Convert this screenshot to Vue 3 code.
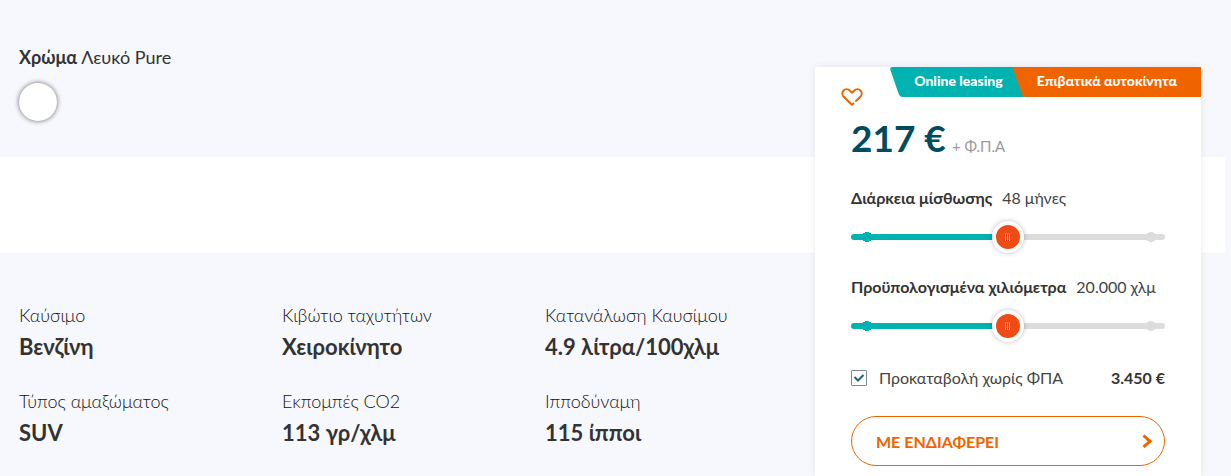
<script setup>
import { ref } from 'vue'

const specs = [
  { label: 'Καύσιμο', value: 'Βενζίνη' },
  { label: 'Κιβώτιο ταχυτήτων', value: 'Χειροκίνητο' },
  { label: 'Κατανάλωση Καυσίμου', value: '4.9 λίτρα/100χλμ' },
  { label: 'Τύπος αμαξώματος', value: 'SUV' },
  { label: 'Εκπομπές CO2', value: '113 γρ/χλμ' },
  { label: 'Ιπποδύναμη', value: '115 ίπποι' }
]

const sliders = ref([
  { id: 'duration', label: 'Διάρκεια μίσθωσης', value: '48 μήνες', position: 50 },
  { id: 'mileage', label: 'Προϋπολογισμένα χιλιόμετρα', value: '20.000 χλμ', position: 50 }
])

const deposit = ref(true)
</script>

<template>
  <div class="page">
    <main class="sections">
      <section class="colour">
        <p class="colour-name"><strong>Χρώμα</strong> Λευκό Pure</p>
        <button class="swatch" type="button" aria-label="Λευκό Pure"></button>
      </section>
      <div class="band"></div>
      <dl class="specs">
        <div v-for="spec in specs" :key="spec.label">
          <dt>{{ spec.label }}</dt>
          <dd>{{ spec.value }}</dd>
        </div>
      </dl>
    </main>

    <aside class="card">
      <header class="top">
        <button class="heart" type="button" aria-label="Αγαπημένα">
          <svg viewBox="0 0 22 20" width="22" height="20">
            <path d="M15 14l4.300-4.200c1.800-1.800 1.800-4.600.1-6.300-1.700-1.700-4.400-1.700-6.100 0L11 5.700 8.700 3.500c-1.700-1.700-4.400-1.700-6.100 0-1.700 1.700-1.700 4.500.1 6.300l7.600 7.500q.7.600 1.400 0l.8-.8" />
          </svg>
        </button>
        <div class="tags">
          <span class="tag teal">
            <svg class="slant" viewBox="0 0 14 30" width="14" height="30"><path d="M14 0H2.500Q-.5 0 .4 3L8.700 27Q9.800 30 13 30H14Z" /></svg>
            <span class="tag-text">Online leasing</span>
          </span>
          <span class="tag orange">
            <svg class="slant" viewBox="0 0 14 30" width="14" height="30"><path d="M14 0H2.500Q-.5 0 .4 3L8.700 27Q9.800 30 13 30H14Z" /></svg>
            <span class="tag-text">Επιβατικά αυτοκίνητα</span>
          </span>
        </div>
      </header>

      <div class="body">
        <p class="price"><strong>217 €</strong> <span>+ Φ.Π.Α</span></p>

        <div v-for="slider in sliders" :key="slider.id" class="field">
          <p class="field-head">
            <label :for="slider.id">{{ slider.label }}</label>
            <output :for="slider.id">{{ slider.value }}</output>
          </p>
          <input
            :id="slider.id"
            v-model="slider.position"
            class="range"
            type="range"
            min="0"
            max="100"
            step="50"
            :style="{ '--fill': slider.position + '%' }"
          />
        </div>

        <div class="deposit">
          <input id="deposit" v-model="deposit" type="checkbox" />
          <svg class="tick" viewBox="0 0 16 16" width="16" height="16"><path d="M3.500 7L7 10.500l5.500-5.500" /></svg>
          <label for="deposit">Προκαταβολή χωρίς ΦΠΑ</label>
          <strong>3.450 €</strong>
        </div>

        <button class="cta" type="button">
          <span>ΜΕ ΕΝΔΙΑΦΕΡΕΙ</span>
          <svg viewBox="0 0 10 14" width="10" height="14"><path d="M1.500 1.500L8 7.300l-6.500 5.700" /></svg>
        </button>
      </div>
    </aside>
  </div>
</template>

<style>
body {
  margin: 0;
  background: #f7f8fd;
}
</style>

<style scoped>
.page {
  display: grid;
  min-height: 100vh;
  font-family: Lato, "Open Sans", sans-serif;
  color: #333;
}
.page *,
.page *::before {
  box-sizing: border-box;
}
.sections,
.card {
  grid-area: 1 / 1;
}
p,
dl,
dd {
  margin: 0;
}
button {
  padding: 0;
  border: 0;
  background: none;
  font: inherit;
}
.colour {
  padding: 45px 19px 36px;
}
.colour-name {
  margin-bottom: 14px;
  font-size: 18px;
  line-height: 24px;
}
.swatch {
  display: block;
  width: 38px;
  height: 38px;
  border-radius: 50%;
  background: #fff;
  box-shadow: 0 0 5px rgba(0, 0, 0, 0.6);
}
.band {
  height: 96px;
  margin-right: 6px;
  background: #fff;
}
.specs {
  display: grid;
  grid-template-columns: repeat(3, 1fr);
  row-gap: 26px;
  padding: 48px 423px 20px 19px;
}
.specs dt {
  font-size: 18px;
  font-weight: 300;
  line-height: 28px;
  color: #111;
}
.specs dd {
  font-size: 22px;
  font-weight: 700;
  line-height: 28px;
  padding-top: 4px;
}
.card {
  justify-self: end;
  width: 386px;
  margin: 67px 30px 0 0;
  background: #fff;
  box-shadow: 0 0 8px rgba(0, 0, 0, 0.08);
}
.top {
  display: flex;
  justify-content: space-between;
  align-items: flex-start;
}
.heart {
  margin: 20px 0 0 26px;
  height: 20px;
}
.heart svg,
.tag svg,
.cta svg {
  display: block;
}
.heart path,
.cta path {
  fill: none;
  stroke: #f06400;
  stroke-width: 2;
}
.heart path {
  stroke-linecap: round;
}
.cta path {
  stroke-width: 3;
}
.tags {
  display: flex;
  height: 30px;
}
.tag {
  display: flex;
  color: #fff;
  font-size: 14px;
  font-weight: 900;
  line-height: 28px;
}
.tag + .tag {
  margin-left: -14px;
}
.tag-text {
  height: 30px;
  padding: 0 24px 0 10px;
}
.teal .tag-text {
  background: #00b2b0;
}
.orange .tag-text {
  background: #f06400;
}
.teal .slant {
  fill: #00b2b0;
}
.orange .slant {
  fill: #f06400;
}
.body {
  padding: 5px 36px 10px;
}
.price {
  margin-bottom: 14px;
  line-height: 52px;
}
.price strong {
  margin-right: 2px;
  font-size: 37px;
  color: #004b5f;
}
.price span {
  font-size: 15px;
  color: #999;
}
.field {
  margin-bottom: 22px;
}
.field-head {
  display: flex;
  gap: 10px;
  margin-bottom: 11px;
  font-size: 16px;
  line-height: 24px;
}
.field-head label,
.deposit strong {
  font-weight: 700;
}
.field-head output,
.deposit label {
  font-weight: 400;
  color: #444;
}
.range {
  display: block;
  width: 100%;
  height: 32px;
  margin: 0;
  appearance: none;
  background:
    radial-gradient(circle, #00b2b0 5px, transparent 5px) 11px 11px / 10px 10px no-repeat,
    radial-gradient(circle, #dcdcdc 5px, transparent 5px) right 9px top 11px / 10px 10px no-repeat;
}
.range::-webkit-slider-runnable-track {
  height: 6px;
  border-radius: 3px;
  background: linear-gradient(90deg, #00b2b0 var(--fill), #dcdcdc var(--fill));
}
.range::-webkit-slider-thumb {
  appearance: none;
  box-sizing: border-box;
  width: 32px;
  height: 32px;
  margin-top: -13px;
  border: 4px solid #fff;
  border-radius: 50%;
  background:
    linear-gradient(#f9ac8b, #f9ac8b) 9px 8px / 1px 8px no-repeat,
    linear-gradient(#f9ac8b, #f9ac8b) 11px 8px / 1px 8px no-repeat,
    linear-gradient(#f9ac8b, #f9ac8b) 13px 8px / 1px 8px no-repeat,
    #f04b14;
  box-shadow: 0 0 5px rgba(0, 0, 0, 0.25);
}
.deposit {
  display: flex;
  align-items: center;
  padding-top: 1px;
  font-size: 16px;
  line-height: 26px;
}
.deposit input {
  appearance: none;
  width: 16px;
  height: 16px;
  margin: 0;
  border: 1px solid #788c93;
  border-radius: 1px;
}
.tick {
  margin: 0 12px 0 -16px;
  visibility: hidden;
  pointer-events: none;
}
.deposit input:checked + .tick {
  visibility: visible;
}
.tick path {
  fill: none;
  stroke: #23647a;
  stroke-width: 2;
}
.deposit strong {
  margin-left: auto;
}
.cta {
  display: flex;
  justify-content: space-between;
  align-items: center;
  width: 100%;
  height: 50px;
  margin-top: 25px;
  padding: 0 12px 0 24px;
  border: 1px solid #f06400;
  border-radius: 25px;
  color: #f06400;
  font-size: 16px;
  font-weight: 700;
}
</style>
